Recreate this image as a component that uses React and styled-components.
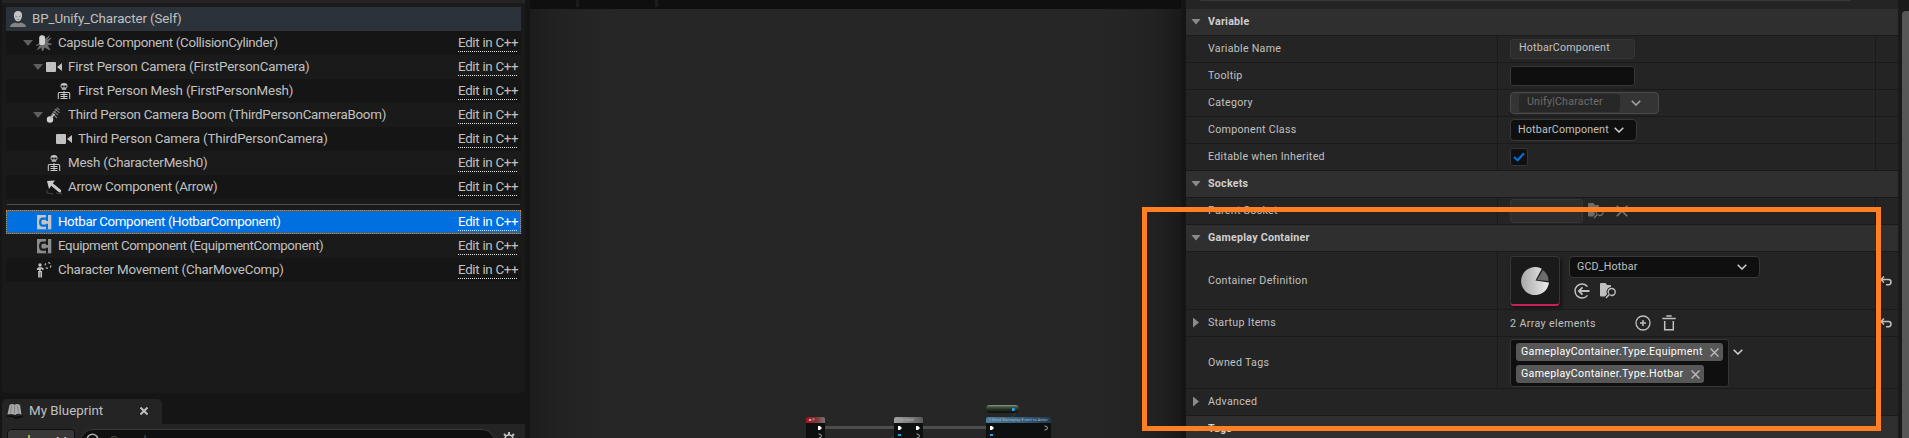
import React from 'react';
import styled, { createGlobalStyle } from 'styled-components';

const Global = createGlobalStyle`
  * { box-sizing: border-box; }
  body { margin: 0; background: #151515; overflow: hidden; }
`;

const Page = styled.div`
  position: relative;
  display: flex;
  width: 1909px;
  height: 438px;
  overflow: hidden;
  background: #151515;
  color: #c0c0c0;
  font-family: Roboto, sans-serif;
  svg { display: block; flex: none; }
`;

/* ---------- left column ---------- */
const LeftColumn = styled.div`
  width: 523px;
  margin-left: 2px;
  display: flex;
  flex-direction: column;
`;
const TreePanel = styled.div`
  height: 393px;
  flex: none;
  background: #1a1a1a;
  border-top: 3px solid #242424;
  padding: 4px 4px 0;
  border-radius: 0 0 4px 4px;
`;
const TreeRow = styled.div`
  display: flex;
  align-items: center;
  height: 24px;
  padding: 0 4px 0 ${p => p.$indent}px;
  font-size: 13.33px;
  background: ${p => (p.$tone === 'root' ? '#2b323a' : p.$tone === 'dark' ? '#151515' : '#1a1a1a')};
`;
const SelectedRow = styled(TreeRow)`
  background: #0070e0;
  color: #fff;
  outline: 1px dotted #d98a1c;
  outline-offset: -1px;
`;
const Twisty = styled.span`
  width: 10px;
  height: 6px;
  margin-right: 3px;
  background: #5f5f5f;
  clip-path: polygon(0 0, 100% 0, 50% 100%);
`;
const TreeLabel = styled.span`
  margin-left: 6px;
  flex: 1;
  white-space: nowrap;
  line-height: 24px;
  letter-spacing: ${p => p.$ls || 0}px;
`;
const EditLink = styled.span`
  height: 17px;
  line-height: 15px;
  width: 59px;
  white-space: nowrap;
  letter-spacing: -0.3px;
  background: repeating-linear-gradient(90deg, #e4e4e4 0 1px, transparent 1px 2px) left bottom / 100% 1px no-repeat;
`;
const TreeRule = styled.div`
  height: 11px;
  padding: 5px 1px 0;
  &::before { content: ''; display: block; height: 1px; background: #4d4d4d; }
`;
const TabStrip = styled.div`
  height: 31px;
  flex: none;
  padding-top: 6px;
  display: flex;
`;
const Tab = styled.div`
  display: flex;
  align-items: center;
  width: 160px;
  height: 25px;
  padding: 0 14px 2px 5px;
  background: #242424;
  border-radius: 5px 5px 0 0;
  font-size: 13.33px;
`;
const TabTitle = styled.span`
  flex: 1;
  margin-left: 6px;
  line-height: 23px;
`;
const Toolbar = styled.div`
  height: 14px;
  flex: none;
  display: flex;
  padding: 5px 9px 0 5px;
  overflow: hidden;
  background: #242424;
`;
const AddButton = styled.div`
  display: flex;
  align-items: flex-start;
  gap: 8px;
  width: 68px;
  height: 26px;
  padding: 5px 0 0 15px;
  border-radius: 4px;
  background: #383838;
  border: 1px solid #101010;
  color: #fff;
  font-size: 13.33px;
  line-height: 15px;
`;
const SearchBox = styled.div`
  display: flex;
  align-items: flex-start;
  gap: 9px;
  flex: 1;
  height: 26px;
  margin: 0 7px 0 5px;
  padding: 3px 0 0 4px;
  border: 1px solid #383838;
  border-radius: 13px;
  background: #0f0f0f;
  color: #4a4a4a;
  font-size: 13.33px;
  span { line-height: 14px; margin-top: 1px; }
`;
const SettingsSlot = styled.div`
  padding-top: 3px;
`;

/* ---------- graph ---------- */
const Graph = styled.div`
  position: relative;
  width: 651px;
  margin-left: 5px;
  background: linear-gradient(90deg, #1c1c1c 0, #222 30px, #262626 80px, #262626 calc(100% - 80px), #222 calc(100% - 30px), #1a1a1a 100%);
`;
const GraphTop = styled.div`
  display: flex;
  gap: 76px;
  height: 9px;
  padding-left: 46px;
  background: #0f0f0f;
`;
const GraphDivider = styled.span`
  width: 3px;
  height: 7px;
  background: #1c1c1c;
`;
const Wires = styled.svg`
  position: absolute;
  left: 0;
  top: 400px;
`;
const Node = styled.div`
  position: absolute;
  left: ${p => p.$x}px;
  top: 417px;
  width: ${p => p.$w}px;
  height: 24px;
  border-radius: 2px 2px 0 0;
  background: #0d100e;
`;
const NodeTitle = styled.div`
  display: flex;
  align-items: center;
  height: 6px;
  padding-left: 3px;
  border-radius: 2px 2px 0 0;
  background: ${p => p.$bg};
  color: #b5b5b5;
  font-size: 4.2px;
  line-height: 6px;
  white-space: nowrap;
`;
const VariableNode = styled.div`
  position: absolute;
  left: 456px;
  top: 405px;
  width: 33px;
  height: 8px;
  border-radius: 4px;
  background: linear-gradient(#8f978d 0, #45553f 2px, #1f281e 5px, #0c0c0c 8px);
`;

/* ---------- details ---------- */
const Details = styled.div`
  width: 712px;
  margin-left: 5px;
  background: #242424;
`;
const DetailsTop = styled.div`
  height: 9px;
  padding: 0 47px 0 14px;
  &::before { content: ''; display: block; height: 1px; background: #383838; border-radius: 0 0 4px 4px; }
`;
const GroupHeader = styled.div`
  display: flex;
  align-items: center;
  height: 27px;
  padding: 0 0 1px 5px;
  background: #2f2f2f;
  border-bottom: 1px solid #1a1a1a;
  color: #d0d0d0;
  font-size: 10.67px;
  font-weight: 700;
  letter-spacing: 0.25px;
`;
const PropertyRow = styled.div`
  display: flex;
  height: ${p => p.$h || 27}px;
  border-bottom: 1px solid #1a1a1a;
  font-size: 10.67px;
`;
const NameCell = styled.div`
  display: flex;
  align-items: center;
  width: ${p => (p.$wide ? 600 : 312)}px;
  border-right: ${p => (p.$wide ? 0 : 1)}px solid #1a1a1a;
  padding: 0 0 ${p => (p.$tall ? 0 : 2)}px 7px;
  letter-spacing: 0.28px;
`;
const ValueCell = styled.div`
  display: flex;
  align-items: ${p => (p.$top ? 'flex-start' : 'center')};
  width: 378px;
  padding: ${p => p.$top || 0}px 0 0 12px;
  border-right: 1px solid #1a1a1a;
  letter-spacing: ${p => p.$ls ?? 0.2}px;
`;
const ResetCell = styled.div`
  display: flex;
  align-items: center;
  padding-left: 4px;
`;
const Arrow = styled.span`
  width: ${p => (p.$closed ? 6 : 10)}px;
  height: ${p => (p.$closed ? 10 : 6)}px;
  margin-top: ${p => (p.$closed ? 1 : 0)}px;
  margin-left: ${p => (p.$closed ? 0 : 0)}px;
  margin-right: ${p => (p.$closed ? 9 : 7)}px;
  background: #8a8a8a;
  clip-path: ${p => (p.$closed ? 'polygon(0 0, 100% 50%, 0 100%)' : 'polygon(0 0, 100% 0, 50% 100%)')};
`;
const Caption = styled.span`
  margin-left: ${p => (p.$indent ? 15 : 0)}px;
  white-space: nowrap;
`;
const GroupCaption = styled(Caption)`
  margin-top: -1px;
`;
const Field = styled.div`
  width: ${p => p.$w}px;
  height: ${p => p.$h || 20}px;
  padding-left: 8px;
  border: 1px solid #363636;
  border-radius: 3px;
  line-height: 16px;
  background: ${p => (p.$dark ? '#0f0f0f' : '#2d2d2d')};
`;
const Combo = styled.div`
  display: flex;
  align-items: center;
  justify-content: space-between;
  width: ${p => p.$w}px;
  height: 22px;
  padding: 0 12px 1px 7px;
  border: 1px solid #383838;
  border-radius: 4px;
  background: #0f0f0f;
`;
const CategoryCombo = styled(Combo)`
  padding: 0 17px 0 8px;
  border-color: #4a4a4a;
  background: #343434;
`;
const CategoryText = styled.span`
  width: 101px;
  height: 18px;
  padding-left: 8px;
  border-radius: 3px;
  background: #272727;
  color: #6c6c6c;
  line-height: 15px;
`;
const CheckBox = styled.div`
  display: flex;
  align-items: center;
  justify-content: center;
  width: 18px;
  height: 18px;
  border: 1px solid #363636;
  border-radius: 3px;
  background: #0f0f0f;
`;
const Thumb = styled.div`
  display: flex;
  align-items: center;
  justify-content: center;
  width: 50px;
  height: 50px;
  border: 1px solid #363636;
  border-bottom: 2px solid #c9205b;
  border-radius: 4px;
  background: #1a1a1a;
  box-shadow: 2px 2px 3px #141414;
`;
const AssetColumn = styled.div`
  display: flex;
  flex-direction: column;
  margin-left: 9px;
`;
const IconLine = styled.div`
  display: flex;
  gap: 10px;
  padding: 5px 0 0 5px;
`;
const TagList = styled.div`
  display: flex;
  flex-direction: column;
  align-items: flex-start;
  gap: 4px;
  width: 219px;
  height: 48px;
  padding: 3px 5px;
  border: 1px solid #363636;
  border-radius: 3px;
  background: #0f0f0f;
`;
const Tag = styled.div`
  display: flex;
  align-items: center;
  justify-content: space-between;
  width: ${p => p.$w}px;
  height: 18px;
  padding: 0 4px 0 5px;
  border-radius: 3px;
  background: #575757;
  color: #fff;
  white-space: nowrap;
  span { margin-top: -2px; }
`;
const TagMenu = styled.div`
  padding: 10px 0 0 4px;
`;
const Spacer = styled.div`
  width: ${p => p.$w}px;
  flex: none;
`;
const ScrollTrack = styled.div`
  width: 11px;
  padding: 11px 0 0 4px;
  background: #1a1a1a;
  &::before { content: ''; display: block; height: 440px; width: 8px; border-radius: 4px 0 0 0; background: #575757; }
`;
const Highlight = styled.div`
  position: absolute;
  left: 1142px;
  top: 207px;
  width: 739px;
  height: 224px;
  border: 5px solid #ff8022;
`;

/* ---------- icons ---------- */
const PersonIcon = () => (
  <svg width="16" height="16" viewBox="0 0 16 16">
    <path d="M8 0C5.4 0 3.7 1.8 3.9 4.6 4 7.6 5.8 10.6 8 10.6s4-3 4.100-6C12.300 1.800 10.600 0 8 0z" fill="#c4c4c4" />
    <path d="M5.200 5l2 .8M10.800 5l-2 .8M6.800 8.300h2.400" stroke="#777" strokeWidth=".8" />
    <path d="M0 16c.3-2.600 2.300-3.800 5.200-4.500C6 12.600 10 12.600 10.800 11.500 13.700 12.200 15.700 13.400 16 16z" fill="#858585" />
  </svg>
);
const CapsuleIcon = () => (
  <svg width="16" height="16" viewBox="0 0 16 16">
    <path d="M0 10.500l5-1.500-3.500 5.500L5.500 12l1 4 2-4 5.500 3-3-5 4.500-.8-4.500-1.500L15 3l-5 3 3.500-5.500" stroke="#6e6e6e" strokeWidth=".9" fill="#6e6e6e" />
    <rect x="3.200" y=".3" width="5.800" height="9.700" rx="2.600" fill="#d0d0d0" />
  </svg>
);
const CameraIcon = () => (
  <svg width="16" height="16" viewBox="0 0 16 16">
    <rect x="0" y="3" width="10" height="10" rx="1" fill="#c0c0c0" />
    <path d="M16 4v8l-5-4z" fill="#c0c0c0" />
  </svg>
);
const SkeletonIcon = () => (
  <svg width="16" height="16" viewBox="0 0 16 16">
    <path d="M8 0C5.800 0 4.500 1.300 4.500 3c0 1.200.5 1.900 1.300 2.300V7h4.400V5.300c.8-.4 1.300-1.100 1.300-2.300C11.500 1.300 10.200 0 8 0z" fill="#c8c8c8" />
    <path d="M5.700 2.700h1.800v1.600H5.700zM8.500 2.700h1.800v1.600H8.500zM6.800 5.500v1.500M8 5.500v1.500M9.200 5.500v1.500" fill="#1a1a1a" stroke="#1a1a1a" strokeWidth=".4" />
    <path d="M2.300 16v-5.500q0-1 1-1h9.400q1 0 1 1V16M8 8v8M4.500 11.500h7M4.500 13.500h7M4.500 15.500h7" stroke="#c8c8c8" strokeWidth="1.050" fill="none" />
  </svg>
);
const BoomIcon = () => (
  <svg width="16" height="16" viewBox="0 0 16 16">
    <path d="M5 9l6-7M6 6l5 5M7.500 4l4.500 4M9 2l4.500 3.700M10.800 .8l2.800 2.300" stroke="#747474" strokeWidth="1.200" fill="none" />
    <circle cx="4" cy="12.500" r="3.200" fill="#d0d0d0" />
    <path d="M4 12l4.500-5" stroke="#bdbdbd" strokeWidth="1.800" />
  </svg>
);
const ArrowIcon = () => (
  <svg width="16" height="16" viewBox="0 0 16 16">
    <path d="M1 11v3l6 1M10 14l6 1" stroke="#454545" fill="none" />
    <path d="M1 2l8-.5-2.200 2.700L15 11v2.500l-2-.2L5.200 6.800 3 10z" fill="#cacaca" />
  </svg>
);
const ComponentIcon = ({ light, hole }) => (
  <svg width="16" height="16" viewBox="0 0 16 16">
    <path d="M1 1h14.300v14.300H1z" fill={light} />
    <path d="M11.200 4.600H6.800Q4.200 4.600 4.200 8.200T6.800 11.700H11.200" stroke={hole} strokeWidth="2.300" fill="none" />
    <path d="M11 1v6M11 9.700v5.600" stroke={hole} strokeWidth="2" />
  </svg>
);
const MovementIcon = () => (
  <svg width="16" height="16" viewBox="0 0 16 16">
    <circle cx="4" cy="3" r="1.700" fill="#c0c0c0" />
    <path d="M1 7.500l2-1.500h2.500l2 1.500M4 5.500V10M3 9v6.500M5.200 9v6.500" stroke="#c0c0c0" strokeWidth="1.700" fill="none" />
    <circle cx="12" cy="3.500" r="2.900" fill="none" stroke="#b0b0b0" strokeWidth="1.300" strokeDasharray="2.200 2.300" />
  </svg>
);
const BookIcon = () => (
  <svg width="16" height="16" viewBox="0 0 16 16">
    <path d="M0 12l3 1 4-1 1 2 3-1h4l1-1v2l-3 1-4 1-4-2-5 0z" fill="#0d0d0d" />
    <path d="M2.500 2Q5 0 7.500 1.700 10.500 0 13 2L14.500 11.500Q11 10 8 12 4 10.500 .5 11.500z" fill="#a8a8a8" />
    <path d="M4.500 2.500l-.8 8M7.500 2.500v8M10.500 2.500l.8 7" stroke="#777" strokeWidth=".8" />
  </svg>
);
const Cross = ({ size = 8, color = '#c0c0c0', width = 1.3 }) => (
  <svg width={size} height={size} viewBox="0 0 8 8">
    <path d="M.5.5l7 7M7.500.5l-7 7" stroke={color} strokeWidth={width} fill="none" />
  </svg>
);
const Chevron = ({ color = '#d0d0d0' }) => (
  <svg width="10" height="6" viewBox="0 0 10 6">
    <path d="M.7.8L5 5 9.300.8" stroke={color} strokeWidth="1.500" fill="none" />
  </svg>
);
const Check = () => (
  <svg width="12" height="10" viewBox="0 0 12 10">
    <path d="M1 5l3.600 3.300L11 1.300" stroke="#0070e0" strokeWidth="2.200" fill="none" />
  </svg>
);
const BrowseIcon = ({ color = '#c0c0c0', bg = '#242424' }) => (
  <svg width="17" height="16" viewBox="0 0 17 16">
    <path d="M0 1q0-1 1-1h4.500l1.500 2h3q1 0 1 1v10.500H1q-1 0-1-1z" fill={color} />
    <circle cx="11.700" cy="9" r="3.700" fill={bg} stroke={bg} strokeWidth="3" />
    <circle cx="11.700" cy="9" r="3.500" fill={bg} stroke={color} strokeWidth="1.400" />
    <path d="M9.300 11.500L6 15" stroke={bg} strokeWidth="3.500" />
    <path d="M9.300 11.500L6 15" stroke={color} strokeWidth="1.500" />
  </svg>
);
const UseIcon = () => (
  <svg width="16" height="16" viewBox="0 0 16 16">
    <path d="M13.500 3.600A7 7 0 1 0 13.500 12.400" stroke="#c0c0c0" strokeWidth="1.500" fill="none" />
    <path d="M15.500 8H5M8.500 4.300L4.800 8l3.700 3.700" stroke="#c0c0c0" strokeWidth="1.800" fill="none" />
  </svg>
);
const PlusCircle = () => (
  <svg width="16" height="16" viewBox="0 0 16 16">
    <circle cx="8" cy="8" r="7" fill="none" stroke="#c0c0c0" strokeWidth="1.300" />
    <path d="M8 5v6M5 8h6" stroke="#c0c0c0" strokeWidth="1.500" />
  </svg>
);
const Trash = () => (
  <svg width="14" height="16" viewBox="0 0 14 16">
    <path d="M4.300 1h5.400M.3 3.500h13.400" stroke="#c0c0c0" strokeWidth="1.700" />
    <path d="M2.700 6v8.700h8.600V6" stroke="#c0c0c0" strokeWidth="1.500" fill="none" />
  </svg>
);
const ResetIcon = () => (
  <svg width="12" height="10" viewBox="0 0 12 10">
    <path d="M4 .5L1 3.500l3 3M1 3.500h7.500Q11 3.500 11 6T8.500 8.700H6" stroke="#c0c0c0" strokeWidth="1.500" fill="none" />
  </svg>
);
const SearchIcon = () => (
  <svg width="16" height="14" viewBox="0 0 16 14">
    <circle cx="7.500" cy="6.500" r="5.300" fill="none" stroke="#b0b0b0" strokeWidth="1.600" />
  </svg>
);
const GearIcon = () => (
  <svg width="14" height="14" viewBox="0 0 14 14">
    <path d="M7 0v3M2 2l2 2M12 2l-2 2M0 7h3M11 7h3" stroke="#c0c0c0" strokeWidth="2" />
    <circle cx="7" cy="7" r="4" fill="none" stroke="#c0c0c0" strokeWidth="1.600" />
  </svg>
);
const PieIcon = () => (
  <svg width="28" height="28" viewBox="0 0 28 28">
    <defs>
      <linearGradient id="pie" x1="0" x2="1"><stop offset="0" stopColor="#a8a8a8" /><stop offset="1" stopColor="#ececec" /></linearGradient>
    </defs>
    <path d="M14.500 13.500L20.800 1.800A14 14 0 1 0 28 15.500z" fill="url(#pie)" />
    <path d="M16 13L21.800 3A13.500 13.500 0 0 1 27.500 14z" fill="#6c6c6c" />
  </svg>
);

const components = [
  { name: 'Capsule Component (CollisionCylinder)', indent: 17, ls: -0.33, open: true, icon: <CapsuleIcon />, tone: 'dark' },
  { name: 'First Person Camera (FirstPersonCamera)', indent: 27, ls: -0.16, open: true, icon: <CameraIcon /> },
  { name: 'First Person Mesh (FirstPersonMesh)', indent: 50, ls: -0.17, icon: <SkeletonIcon />, tone: 'dark' },
  { name: 'Third Person Camera Boom (ThirdPersonCameraBoom)', indent: 27, ls: -0.24, open: true, icon: <BoomIcon /> },
  { name: 'Third Person Camera (ThirdPersonCamera)', indent: 50, ls: -0.16, icon: <CameraIcon />, tone: 'dark' },
  { name: 'Mesh (CharacterMesh0)', indent: 40, ls: -0.19, icon: <SkeletonIcon /> },
  { name: 'Arrow Component (Arrow)', indent: 40, ls: -0.26, icon: <ArrowIcon />, tone: 'dark' },
];

const inherited = [
  { name: 'Equipment Component (EquipmentComponent)', indent: 30, ls: -0.4, icon: <ComponentIcon light="#8c8c8c" hole="#1a1a1a" /> },
  { name: 'Character Movement (CharMoveComp)', indent: 30, ls: -0.2, icon: <MovementIcon />, tone: 'dark' },
];

const ComponentRow = ({ item }) => (
  <TreeRow $indent={item.indent} $tone={item.tone}>
    {item.open && <Twisty />}
    {item.icon}
    <TreeLabel $ls={item.ls}>{item.name}</TreeLabel>
    <EditLink>Edit in C++</EditLink>
  </TreeRow>
);

const Group = ({ children }) => (
  <GroupHeader><Arrow /><GroupCaption>{children}</GroupCaption></GroupHeader>
);

const Property = ({ name, h, closed, reset, children, top, ls }) => (
  <PropertyRow $h={h}>
    <NameCell $tall={h > 30}>{closed && <Arrow $closed />}<Caption $indent={!closed}>{name}</Caption></NameCell>
    <ValueCell $top={top} $ls={ls}>{children}</ValueCell>
    <ResetCell>{reset && <ResetIcon />}</ResetCell>
  </PropertyRow>
);

export default function App() {
  return (
    <Page>
      <Global />
      <LeftColumn>
        <TreePanel>
          <TreeRow $indent={4} $tone="root"><PersonIcon /><TreeLabel $ls={-0.1}>BP_Unify_Character (Self)</TreeLabel></TreeRow>
          {components.map(c => <ComponentRow key={c.name} item={c} />)}
          <TreeRule />
          <SelectedRow $indent={30}>
            <ComponentIcon light="#c4c4c4" hole="#0070e0" />
            <TreeLabel $ls={-0.39}>Hotbar Component (HotbarComponent)</TreeLabel>
            <EditLink>Edit in C++</EditLink>
          </SelectedRow>
          {inherited.map(c => <ComponentRow key={c.name} item={c} />)}
        </TreePanel>
        <TabStrip>
          <Tab><BookIcon /><TabTitle>My Blueprint</TabTitle><Cross size={8} width={2} /></Tab>
        </TabStrip>
        <Toolbar>
          <AddButton>
            <svg width="12" height="12" viewBox="0 0 12 12"><path d="M6 0v12M0 6h12" stroke="#8bc24a" strokeWidth="2" /></svg>
            Add
          </AddButton>
          <SearchBox><SearchIcon /><span>Search</span></SearchBox>
          <SettingsSlot><GearIcon /></SettingsSlot>
        </Toolbar>
      </LeftColumn>

      <Graph>
        <GraphTop><GraphDivider /><GraphDivider /></GraphTop>
        <Wires width="651" height="38" viewBox="0 0 651 38">
          <path d="M295 27.500H364M393 27.500H457" stroke="#4d4d4d" strokeWidth="3" />
          <path d="M361 38q2-1 4-1M487 10q-2 7-8 8" stroke="#1c4a68" fill="none" />
        </Wires>
        <Node $x={276} $w={19}>
          <NodeTitle $bg="linear-gradient(90deg, #a8121c, #7d3a3c 60%, #777)">■ F</NodeTitle>
        </Node>
        <Node $x={364} $w={29}>
          <NodeTitle $bg="linear-gradient(90deg, #a0a0a0, #5c5c5c)">? Is Valid</NodeTitle>
        </Node>
        <Node $x={456} $w={65}>
          <NodeTitle $bg="linear-gradient(90deg, #4a80a0, #2c5270 70%, #24384a)">f Send Gameplay Event to Actor</NodeTitle>
        </Node>
        <VariableNode />
        <Wires width="651" height="38" viewBox="0 0 651 38">
          <path d="M288 26h2l2 2-2 2h-2zM368 26h2l2 2-2 2h-2zM386 26h2l2 2-2 2h-2zM460 26h2l2 2-2 2h-2z" fill="#fff" />
          <path d="M288.500 34q3 0 3 2t-3 2M386.500 34q3 0 3 2t-3 2M514.500 26q3 0 3 2t-3 2" stroke="#aaa" fill="none" />
          <path d="M368 34h3v2h-3zM460 34h3v2h-3zM482 8h2l1.500 1.500-1.500 1.500h-2z" fill="#19a3f0" />
        </Wires>
      </Graph>

      <Details>
        <DetailsTop />
        <Group>Variable</Group>
        <Property name="Variable Name"><Field $w={125}>HotbarComponent</Field></Property>
        <Property name="Tooltip"><Field $w={125} $dark /></Property>
        <Property name="Category">
          <CategoryCombo $w={149}><CategoryText>Unify|Character</CategoryText><Chevron color="#a8a8a8" /></CategoryCombo>
        </Property>
        <Property name="Component Class"><Combo $w={127}>HotbarComponent<Chevron /></Combo></Property>
        <Property name="Editable when Inherited"><CheckBox><Check /></CheckBox></Property>
        <Group>Sockets</Group>
        <Property name="Parent Socket">
          <Field $w={73} $h={24} />
          <Spacer $w={5} />
          <BrowseIcon color="#6c6c6c" />
          <Spacer $w={11} />
          <Cross size={12} color="#777" width={1.1} />
        </Property>
        <Group>Gameplay Container</Group>
        <Property name="Container Definition" h={58} top={4} reset>
          <Thumb><PieIcon /></Thumb>
          <AssetColumn>
            <Combo $w={191}>GCD_Hotbar<Chevron /></Combo>
            <IconLine><UseIcon /><BrowseIcon /></IconLine>
          </AssetColumn>
        </Property>
        <Property name="Startup Items" closed reset ls={0.38}>
          <Spacer $w={125}>2 Array elements</Spacer>
          <PlusCircle />
          <Spacer $w={11} />
          <Trash />
        </Property>
        <Property name="Owned Tags" h={52} top={2} ls={0.31}>
          <TagList>
            <Tag $w={207}><span>GameplayContainer.Type.Equipment</span><Cross size={9} width={1.1} /></Tag>
            <Tag $w={188}><span>GameplayContainer.Type.Hotbar</span><Cross size={9} width={1.1} /></Tag>
          </TagList>
          <TagMenu><Chevron /></TagMenu>
        </Property>
        <PropertyRow><NameCell $wide><Arrow $closed /><Caption>Advanced</Caption></NameCell></PropertyRow>
        <Group>Tags</Group>
      </Details>
      <ScrollTrack />
      <Highlight />
    </Page>
  );
}
